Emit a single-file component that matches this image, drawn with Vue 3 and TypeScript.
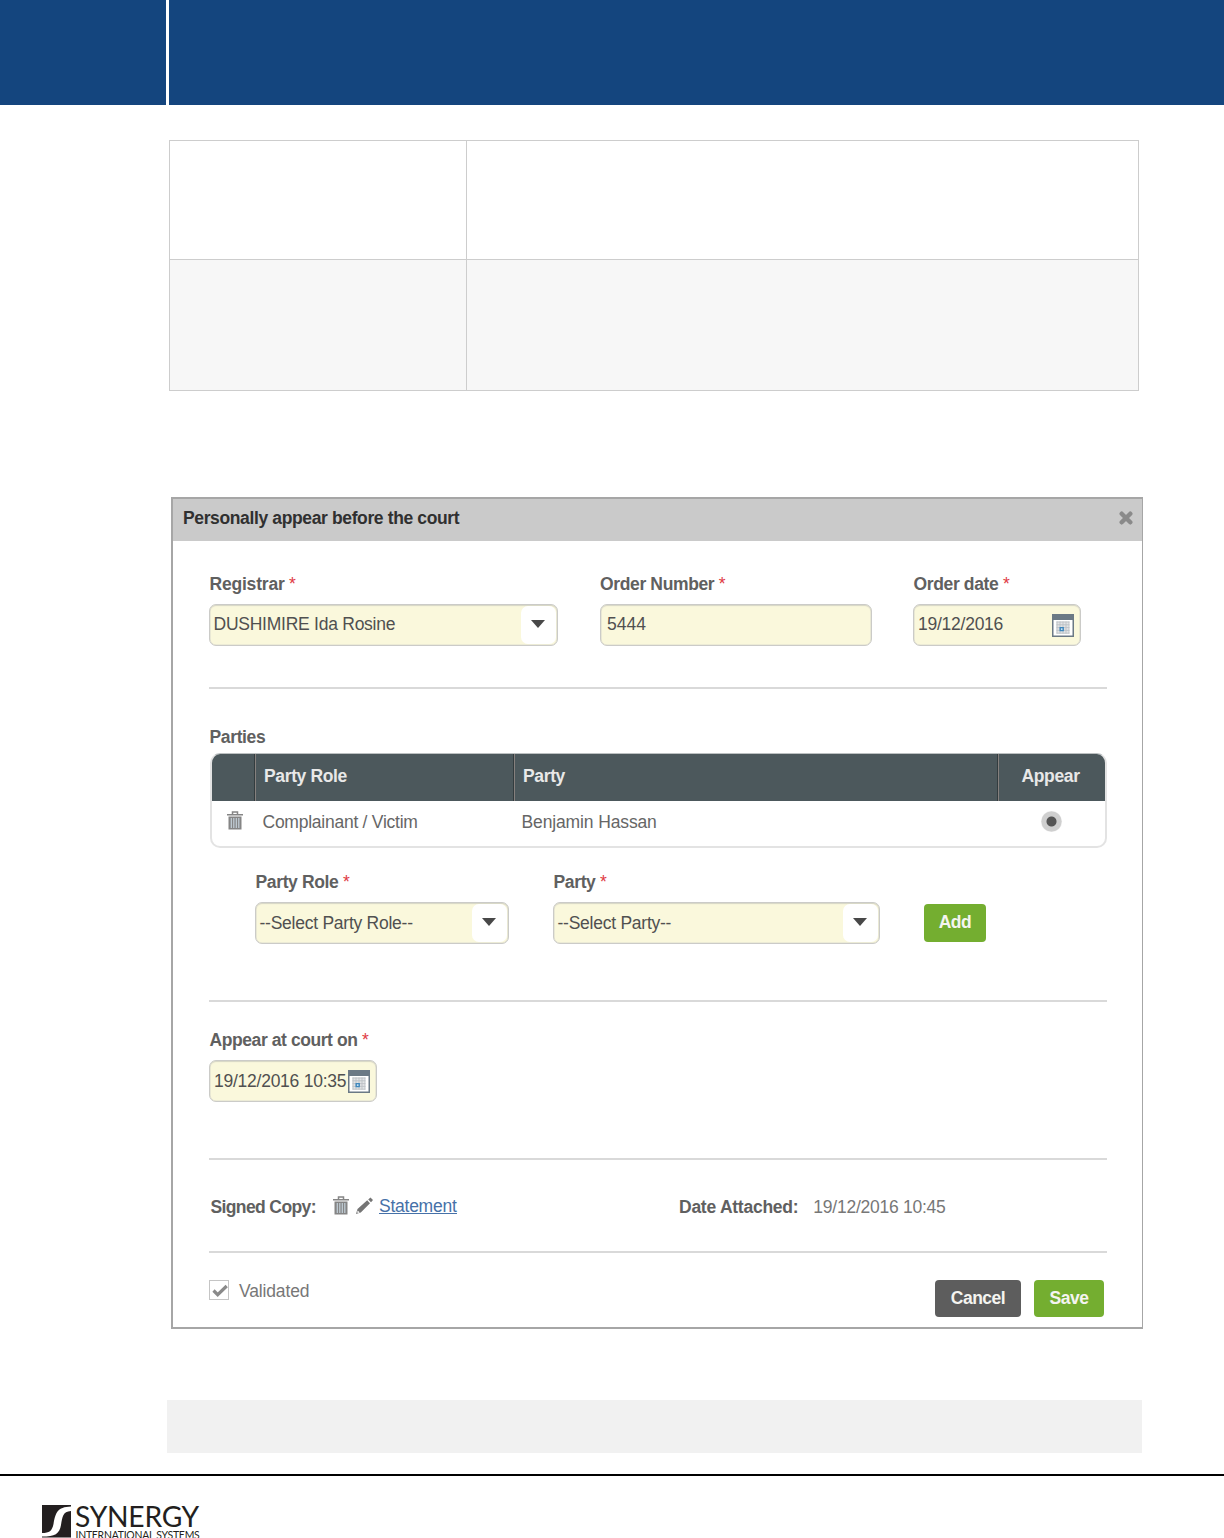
<script setup lang="ts">
interface Party { role: string; name: string }

const parties: Party[] = [{ role: 'Complainant / Victim', name: 'Benjamin Hassan' }]
</script>

<template>
  <div class="page">
    <svg class="symbols" width="0" height="0">
      <symbol id="calendar" viewBox="0 0 22 23">
        <path d="M0 0h22v23H0z" fill="#6b7985" />
        <path d="M1.500 6h19v15.500h-19z" fill="#fff" />
        <path d="M4.500 7.500h12.500v12h-12.500z" fill="#e2e4e6" />
        <path d="M5 7.500v12M8 7.500v12M11 7.500v12M14 7.500v12M17 7.500v12M4.500 8h13M4.500 10.800h13M4.500 13.600h13M4.500 16.400h13M4.500 19.200h13" stroke="#bcc1c5" stroke-width=".9" />
        <path d="M8.200 13.600h3v3h-3z" fill="#c7e0f2" stroke="#3f87bc" stroke-width="1.400" />
      </symbol>
      <symbol id="bin" viewBox="0 0 16 19">
        <path d="M5.500 3V1h5v2M0 3.700h16" fill="none" stroke="#858585" stroke-width="1.500" />
        <path d="M1.500 5.500h13V18.500h-13z" fill="#858585" />
        <path d="M4.300 7v10M6.800 7v10M9.300 7v10M11.800 7v10" stroke="#c3d0d9" stroke-width="1.200" />
      </symbol>
    </svg>

    <header class="banner"><div class="banner-side"></div><div class="banner-main"></div></header>

    <div class="grid-table"><div></div><div></div><div class="shade"></div><div class="shade"></div></div>

    <section class="dialog">
      <div class="dialog-head">
        <h1>Personally appear before the court</h1>
        <svg class="close" width="14" height="14" viewBox="0 0 14 14"><path d="M2.700 2.700 11.300 11.300M11.300 2.700 2.700 11.300" stroke="#8a8a8a" stroke-width="4.400" stroke-linecap="round" /></svg>
      </div>

      <div class="body">
        <div class="row order-row">
          <div class="field registrar">
            <label class="loose">Registrar<i>*</i></label>
            <div class="input select"><span>DUSHIMIRE Ida Rosine</span><b class="arrow"></b></div>
          </div>
          <div class="field number">
            <label>Order Number<i>*</i></label>
            <div class="input"><span class="loose">5444</span></div>
          </div>
          <div class="field date">
            <label>Order date<i>*</i></label>
            <div class="input">
              <span>19/12/2016</span>
              <svg class="cal" width="22" height="23"><use href="#calendar" /></svg>
            </div>
          </div>
        </div>
        <hr class="rule-one">

        <label class="parties-label">Parties</label>
        <div class="parties">
          <div class="cols head"><span></span><span class="cell">Party Role</span><span class="cell">Party</span><span class="cell centre">Appear</span></div>
          <div v-for="party in parties" :key="party.name" class="cols line">
            <span class="bin-cell"><svg width="16" height="19"><use href="#bin" /></svg></span>
            <span class="cell">{{ party.role }}</span><span class="cell name">{{ party.name }}</span>
            <span class="radio-cell"><b class="radio"></b></span>
          </div>
        </div>

        <div class="row add-row">
          <div class="field role">
            <label>Party Role<i>*</i></label>
            <div class="input select"><span>--Select Party Role--</span><b class="arrow"></b></div>
          </div>
          <div class="field party">
            <label>Party<i>*</i></label>
            <div class="input select"><span>--Select Party--</span><b class="arrow"></b></div>
          </div>
          <button class="btn add">Add</button>
        </div>
        <hr class="rule-two">

        <div class="row court-row">
          <div class="field date">
            <label class="tight">Appear at court on<i>*</i></label>
            <div class="input">
              <span>19/12/2016 10:35</span>
              <svg class="cal" width="22" height="23"><use href="#calendar" /></svg>
            </div>
          </div>
        </div>
        <hr class="rule-three">

        <div class="attachment">
          <div class="copy">
            <strong class="signed">Signed Copy:</strong>
            <svg class="bin" width="16" height="19"><use href="#bin" /></svg>
            <svg class="pencil" width="17" height="17" viewBox="0 0 17 17"><path d="M0 17 1.500 12 11.200 3.300 14 6.200 4.800 15.500zM12.200 2.400 14.500.5 17 3 15 5.200z" fill="#757575" /><path d="m1.700 13.500 2 2-1.700.5-.8-.8z" fill="#fff" /></svg>
            <a>Statement</a>
          </div>
          <strong>Date Attached:</strong>
          <span class="stamp">19/12/2016 10:45</span>
        </div>
        <hr class="rule-four">

        <div class="actions">
          <b class="check"><svg width="20" height="20" viewBox="0 0 20 20"><path d="m4.500 10.500 4.200 4.200 9-8.700" fill="none" stroke="#8a8a8a" stroke-width="3.200" /></svg></b>
          <span class="validated">Validated</span>
          <button class="btn cancel">Cancel</button>
          <button class="btn save">Save</button>
        </div>
      </div>
    </section>

    <div class="note"></div>
    <footer>
      <svg width="160" height="33" viewBox="0 0 160 33">
        <path d="M0 0h29v32.500H0z" fill="#231f20" />
        <path d="M0 28C7.500 28 10 26 11.500 19C13.500 8 15 2 29 1.500V6C20.500 6.500 20.500 12 19 20C17.500 29 13 31.500 0 31.500z" fill="#fff" />
        <text x="33" y="21.600" font-size="29" textLength="124" lengthAdjust="spacingAndGlyphs">SYNERGY</text>
        <text x="33.500" y="34.200" font-size="10.500" textLength="124" lengthAdjust="spacingAndGlyphs">INTERNATIONAL SYSTEMS</text>
      </svg>
    </footer>
  </div>
</template>

<style>
body { margin: 0; background: #fff; }
</style>

<style scoped>
* { box-sizing: border-box; }
.symbols { position: absolute; }
.page { width: 1224px; height: 1538px; overflow: hidden; font: 17.5px/20px "Liberation Sans", Arial, sans-serif; letter-spacing: -.25px; color: #505050; }
.banner { display: flex; gap: 3px; height: 105px; }
.banner-side { width: 166px; background: #14457e; }
.banner-main { flex: 1; background: #14457e; }
.grid-table { display: grid; grid-template: 118px 130px / 296px 671px; gap: 1px; width: 970px; height: 251px; margin: 35px 0 0 169px; padding: 1px; background: #cdcdcd; }
.grid-table div { background: #fff; }
.grid-table .shade { background: #f7f7f7; }

.dialog { width: 972px; height: 832px; margin: 106px 0 0 171px; border: 2px solid #a6a6a6; border-right-width: 1px; }
.dialog-head { display: flex; align-items: flex-start; justify-content: space-between; height: 42px; padding: 9px 9px 0 10px; background: #cacaca; }
.close { margin-top: 3px; }
h1 { margin: 0; font-size: 17.5px; line-height: 20px; letter-spacing: -.37px; color: #303030; white-space: nowrap; }
.body { width: 898px; margin-left: 36px; padding-top: 33px; white-space: nowrap; }
.row { display: flex; }
label { display: block; height: 20px; padding-left: .5px; font-weight: 700; letter-spacing: -.36px; color: #606060; }
label.tight { letter-spacing: -.42px; }
.loose { letter-spacing: -.2px; }
label i { margin-left: 4.500px; font-weight: 400; font-style: normal; color: #e03a44; }
.input { display: flex; align-items: center; height: 42px; margin-top: 10px; padding: 0 6px 0 4px; border: 1px solid #cbcbc8; border-radius: 7px; background: #faf8dc; box-shadow: inset 0 1px 1px #d8d7c6, inset 0 0 0 .5px #deddcf; }
.order-row .input span { margin-top: -2px; }
.number .input .loose { letter-spacing: 0; }
.select { padding: 0 1px 0 3.500px; justify-content: space-between; }
.arrow { display: flex; align-items: center; justify-content: center; width: 35px; height: 38px; border-radius: 7px; background: #fff; }
.arrow::after { content: ""; margin: -3px 0 0 -2px; border: 7px solid transparent; border-top: 8px solid #484848; border-bottom: 0; }
.registrar { width: 349px; }
.number { width: 272px; margin-left: 42px; }
.number label { padding-left: 0; }
.number .input { padding-left: 6px; }
.date { width: 168px; }
.order-row .date { margin-left: 41px; }
.cal { margin-left: auto; flex: none; }
hr { height: 2px; margin: 0; border: 0; background: #d9d9d9; }
.rule-one { margin-top: 41px; }
.parties-label { margin-top: 38px; }
.parties { height: 95px; margin: 6px 0 0 1px; border: 2px solid #e3e3e3; border-top: 1px solid #bcc0c1; border-radius: 10px; overflow: hidden; }
.cols { display: grid; grid-template-columns: 43px 259px 484px 1fr; }
.head { height: 47px; background: #4c585c; color: #e8e8e8; font-weight: 700; letter-spacing: -.36px; }
.head .cell { border-left: 1px solid #85807e; box-shadow: -1px 0 #333c3f; padding: 12px 0 0 8px; }
.head .centre { padding-left: 22.500px; }
.line { height: 45px; color: #666; }
.line .cell { padding: 11px 0 0 7.500px; }
.line .name { letter-spacing: -.13px; }
.bin-cell { padding: 10px 0 0 14.500px; }
.radio-cell { padding: 10px 0 0 43px; }
.radio { display: block; width: 21px; height: 21px; border-radius: 50%; background: radial-gradient(circle, #555 0 4.500px, #cfcfcf 5.500px 9.500px, #e5e5e5 10.500px); }
.add-row { margin: 24px 0 0 46px; }
.role { width: 254px; }
.party { width: 327px; margin-left: 44px; }
.btn { padding: 0 0 2px; border: 0; border-radius: 4px; background: #74ae30; color: #f4f4f0; font: 700 17.5px/20px "Liberation Sans", Arial, sans-serif; letter-spacing: -.5px; text-align: center; }
.add { width: 62px; height: 38px; margin: 32px 0 0 44px; }
.rule-two { margin-top: 56px; }
.court-row { margin-top: 28px; }
.rule-three { margin-top: 56px; }
.attachment { display: flex; height: 20px; margin: 37px 0 0 1px; }
.copy { display: flex; width: 469px; }
.attachment strong { letter-spacing: -.25px; color: #606060; }
.attachment .signed { width: 105px; padding-left: .5px; letter-spacing: -.62px; }
.bin { margin: -1px 7px 0 17.500px; }
.pencil { margin: 0 6.500px 0 0; }
a { height: 18px; margin-top: -1px; line-height: 20px; color: #4671a8; border-bottom: 1px solid #4671a8; }
.stamp { margin-left: 15px; color: #777; }
.rule-four { margin-top: 34px; }
.actions { display: flex; align-items: flex-start; padding-top: 27px; }
.check { width: 20px; height: 20px; border: 1px solid #c5c5c5; }
.check svg { display: block; margin: -1px; }
.validated { margin-left: 10px; margin-top: 1px; letter-spacing: -.15px; color: #777; }
.cancel { width: 86px; height: 37px; margin-left: auto; background: #5d5d5d; }
.save { width: 70px; height: 37px; margin: 0 3px 0 13px; }
.note { width: 975px; height: 53px; margin: 71px 0 0 167px; background: #f1f1f1; }
footer { height: 64px; margin-top: 21px; padding: 29px 0 0 42px; border-top: 2px solid #000; }
footer svg { display: block; font-family: Lato, sans-serif; fill: #231f20; }
</style>
